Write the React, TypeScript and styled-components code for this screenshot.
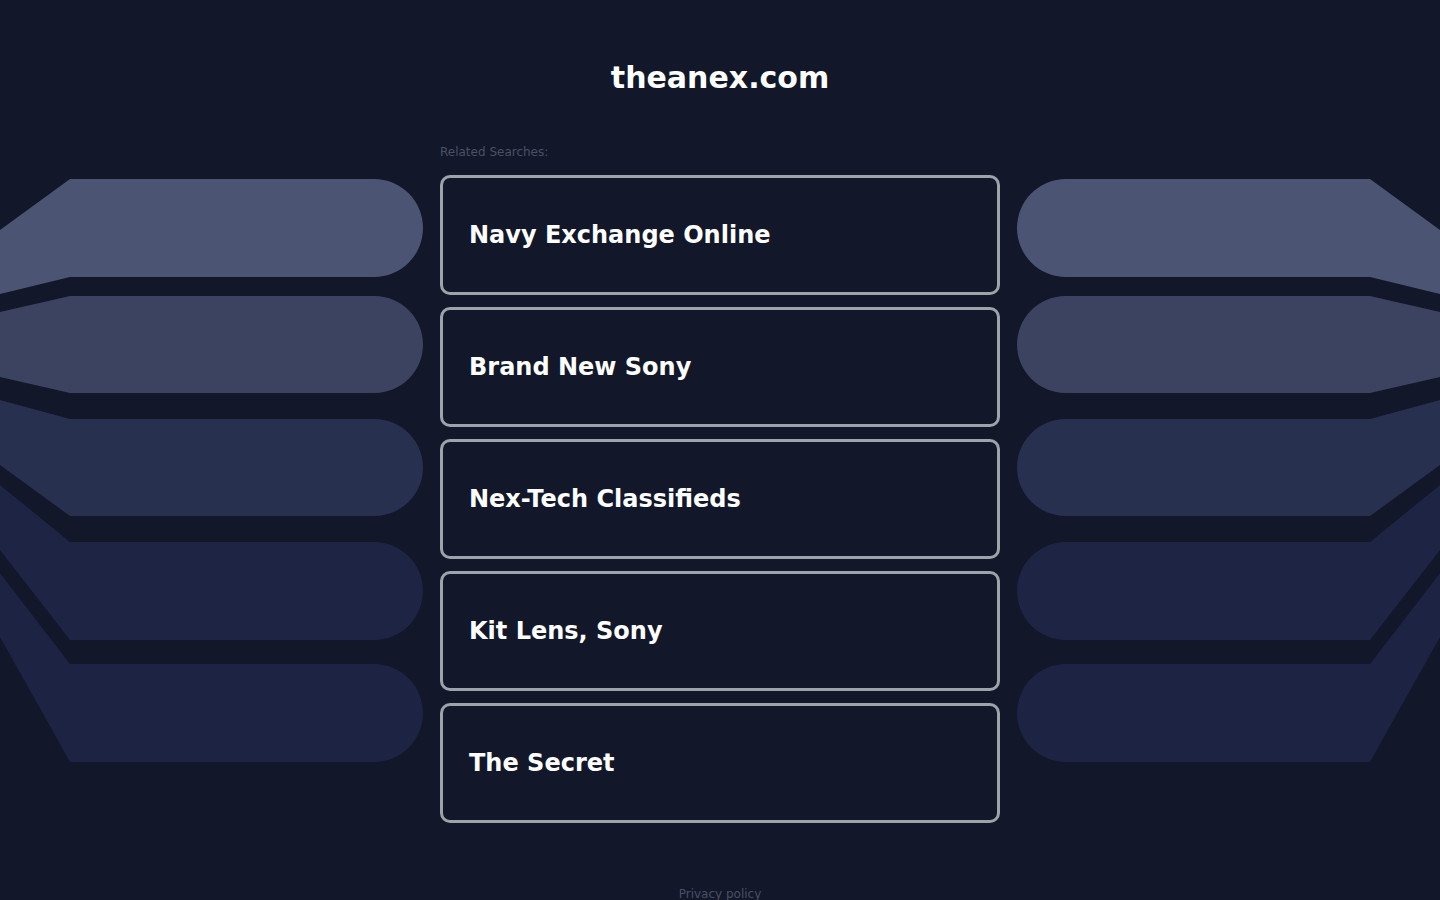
import React from "react";
import styled, { createGlobalStyle } from "styled-components";

const GlobalStyle = createGlobalStyle`
  html, body {
    margin: 0;
    padding: 0;
    background: #121729;
  }
  body {
    font-family: "DejaVu Sans", "Liberation Sans", sans-serif;
    overflow: hidden;
  }
`;

const Page = styled.div`
  min-height: 900px;
  background: #121729;
  display: flex;
  flex-direction: column;
  align-items: center;
`;

const Title = styled.h1`
  margin: 60px 0 0;
  font-size: 30px;
  line-height: 35px;
  font-weight: 700;
  color: #ffffff;
  letter-spacing: 0;
`;

const Layout = styled.div`
  width: 100%;
  margin-top: 50px;
  display: grid;
  grid-template-columns: 1fr 560px 1fr;
  grid-template-rows: auto auto;
  column-gap: 17px;
`;

const Label = styled.div`
  grid-column: 2;
  grid-row: 1;
  font-size: 12px;
  line-height: 14px;
  color: #4b5066;
  margin-bottom: 16px;
`;

const Decor = styled.svg<{ $mirrored?: boolean }>`
  grid-row: 2;
  grid-column: ${(p) => (p.$mirrored ? 3 : 1)};
  justify-self: ${(p) => (p.$mirrored ? "start" : "end")};
  width: 423px;
  height: 590px;
  display: block;
  transform: ${(p) => (p.$mirrored ? "scaleX(-1)" : "none")};
`;

const CardList = styled.div`
  grid-column: 2;
  grid-row: 2;
  display: flex;
  flex-direction: column;
  gap: 12px;
`;

const Card = styled.a`
  box-sizing: border-box;
  height: 120px;
  border: 3px solid #9ea3ab;
  border-radius: 10px;
  display: flex;
  align-items: center;
  padding: 0 26px;
  text-decoration: none;
  color: #ffffff;
  font-size: 24px;
  font-weight: 700;
  line-height: 28px;
  cursor: pointer;
`;

const Footer = styled.div`
  margin-top: 64px;
  font-size: 12px;
  line-height: 14px;
  color: #4b5066;
`;

type Bar = { t: number; b: number; t0: number; b0: number; color: string };

const bars: Bar[] = [
  { t: 4, b: 102, t0: 55, b0: 119, color: "#4b5573" },
  { t: 121, b: 218, t0: 137, b0: 202, color: "#3b4361" },
  { t: 244, b: 341, t0: 225, b0: 290, color: "#28304f" },
  { t: 367, b: 465, t0: 310, b0: 375, color: "#1e2544" },
  { t: 489, b: 587, t0: 398, b0: 462, color: "#1c2343" },
];

const barPath = (bar: Bar) => {
  const r = (bar.b - bar.t) / 2;
  const xr = 423 - r;
  return `M 0 ${bar.t0} L 70 ${bar.t} L ${xr} ${bar.t} A ${r} ${r} 0 0 1 ${xr} ${bar.b} L 70 ${bar.b} L 0 ${bar.b0} Z`;
};

const Decoration = ({ mirrored }: { mirrored?: boolean }) => (
  <Decor $mirrored={mirrored} viewBox="0 0 423 590" aria-hidden="true">
    {bars.map((bar, i) => (
      <path key={i} d={barPath(bar)} fill={bar.color} />
    ))}
  </Decor>
);

const searches = [
  "Navy Exchange Online",
  "Brand New Sony",
  "Nex-Tech Classifieds",
  "Kit Lens, Sony",
  "The Secret",
];

export default function App() {
  return (
    <>
      <GlobalStyle />
      <Page>
        <Title>theanex.com</Title>
        <Layout>
          <Label>Related Searches:</Label>
          <Decoration />
          <CardList>
            {searches.map((s) => (
              <Card key={s}>{s}</Card>
            ))}
          </CardList>
          <Decoration mirrored />
        </Layout>
        <Footer>Privacy policy</Footer>
      </Page>
    </>
  );
}
